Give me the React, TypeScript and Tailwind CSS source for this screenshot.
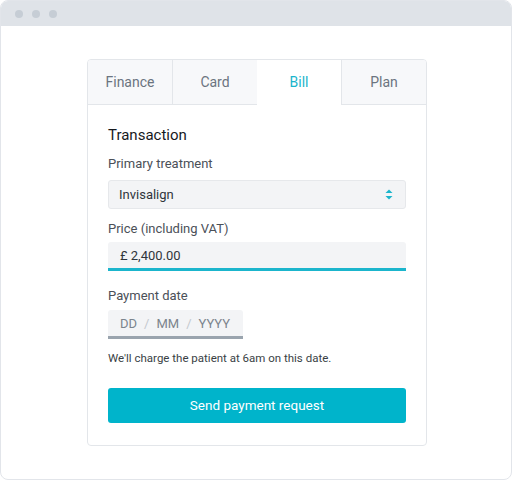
import React from "react";

const tabs = ["Finance", "Card", "Bill", "Plan"];

export default function App() {
  const active = "Bill";
  return (
    <div className="h-[480px] w-[512px] bg-white font-['Roboto',sans-serif]">
      <div className="flex h-[480px] flex-col overflow-hidden rounded-[8px] border border-[#e2e5ea]">
        {/* window bar */}
        <div className="flex h-[25px] shrink-0 items-center gap-[9px] bg-[#dfe3e8] pl-[14px]">
          <span className="h-[8px] w-[8px] rounded-full bg-[#c6cdd5]" />
          <span className="h-[8px] w-[8px] rounded-full bg-[#c6cdd5]" />
          <span className="h-[8px] w-[8px] rounded-full bg-[#c6cdd5]" />
        </div>

        <div className="flex pl-[86px] pt-[33px]">
          <div className="w-[340px] overflow-hidden rounded-[4px] border border-[#e3e6ea] bg-white">
            <div className="flex h-[45px]">
              {tabs.map((t, i) => (
                <div
                  key={t}
                  className={
                    t === active
                      ? "flex flex-1 items-center justify-center bg-white text-[14px] text-[#1bb5cc]"
                      : i === 0
                      ? "flex flex-1 items-center justify-center border-b border-[#e3e6ea] bg-[#f7f8fa] text-[14px] text-[#6b7480]"
                      : "flex flex-1 items-center justify-center border-b border-l border-[#e3e6ea] bg-[#f7f8fa] text-[14px] text-[#6b7480]"
                  }
                >
                  {t}
                </div>
              ))}
            </div>

            <div className="px-[20px] pb-[22px] pt-[20px]">
              <div className="text-[15px] leading-[20px] text-[#16191d]">Transaction</div>

              <div className="mt-[10px] text-[13px] leading-[18px] text-[#4b5058]">Primary treatment</div>
              <div className="mt-[7px] flex h-[29px] items-center justify-between rounded-[3px] border border-[#e6e8eb] bg-[#f3f4f6] pl-[10px] pr-[12px]">
                <span className="text-[13px] text-[#30353b]">Invisalign</span>
                <svg width="8" height="11" viewBox="0 0 8 11">
                  <path d="M4 0.5 L7.5 4 H0.5 Z" fill="#1bb5cc" />
                  <path d="M4 10.5 L7.5 7 H0.5 Z" fill="#1bb5cc" />
                </svg>
              </div>

              <div className="mt-[11px] text-[13px] leading-[18px] text-[#4b5058]">Price (including VAT)</div>
              <div className="mt-[4px] flex h-[29px] items-center rounded-t-[3px] border-b-[3px] border-[#1bb5cc] bg-[#f3f4f6] pl-[12px] pt-[1px]">
                <span className="text-[13px] text-[#30353b]">£ 2,400.00</span>
              </div>

              <div className="mt-[16px] text-[13px] leading-[18px] text-[#4b5058]">Payment date</div>
              <div className="mt-[5px] flex h-[29px] w-[135px] items-center gap-[7px] rounded-t-[3px] border-b-[3px] border-[#9aa4ae] bg-[#f3f4f6] pl-[12px] pt-[1px] text-[13px] text-[#7c848d]">
                <span>DD</span>
                <span className="text-[#c3c8ce]">/</span>
                <span>MM</span>
                <span className="text-[#c3c8ce]">/</span>
                <span>YYYY</span>
              </div>

              <div className="mt-[11px] text-[11.5px] leading-[16px] text-[#3a3f45]">
                We'll charge the patient at 6am on this date.
              </div>

              <button className="mt-[22px] flex h-[35px] w-full items-center justify-center rounded-[3px] bg-[#00b4cb] text-[13.5px] text-white">
                Send payment request
              </button>
            </div>
          </div>
        </div>
      </div>
    </div>
  );
}
